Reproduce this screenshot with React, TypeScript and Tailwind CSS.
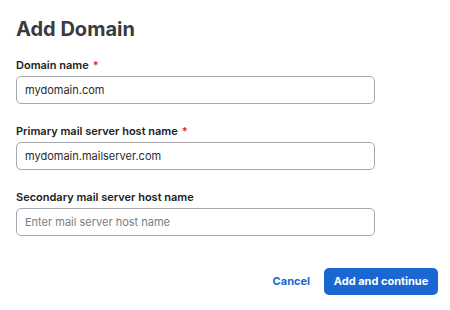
import React from 'react';

const Field: React.FC<{ label: string; required?: boolean; value?: string; placeholder?: string }> = ({
  label,
  required,
  value,
  placeholder,
}) => (
  <div className="flex flex-col gap-[4px]">
    <label className="text-[11px] leading-[14px] font-semibold text-[#202124]">
      {label}
      {required && <span className="ml-[4px] text-[#d93025]">*</span>}
    </label>
    <input
      type="text"
      defaultValue={value}
      placeholder={placeholder}
      className="w-[359px] h-[28px] px-[8px] rounded-[5px] border border-[#a6a8ad] text-[11px] text-[#2b2b2b] placeholder:text-[#7b7e84] outline-none"
    />
  </div>
);

export default function App() {
  return (
    <div className="w-[450px] h-[310px] bg-white pt-[15px] pl-[16px] pr-[12px] flex flex-col" style={{ fontFamily: 'Inter, "Noto Sans", sans-serif' }}>
      <h1 className="text-[20px] leading-[28px] font-bold text-[#3a3b3e]">Add Domain</h1>
      <div className="mt-[15px] flex flex-col gap-[20px]">
        <Field label="Domain name" required value="mydomain.com" />
        <Field label="Primary mail server host name" required value="mydomain.mailserver.com" />
        <Field label="Secondary mail server host name" placeholder="Enter mail server host name" />
      </div>
      <div className="mt-[32px] flex items-center justify-end gap-[14px]">
        <button className="text-[11px] font-bold text-[#1a67d2]">Cancel</button>
        <button className="h-[27px] w-[114px] rounded-[5px] bg-[#1a67d2] text-white text-[11px] font-bold">
          Add and continue
        </button>
      </div>
    </div>
  );
}
